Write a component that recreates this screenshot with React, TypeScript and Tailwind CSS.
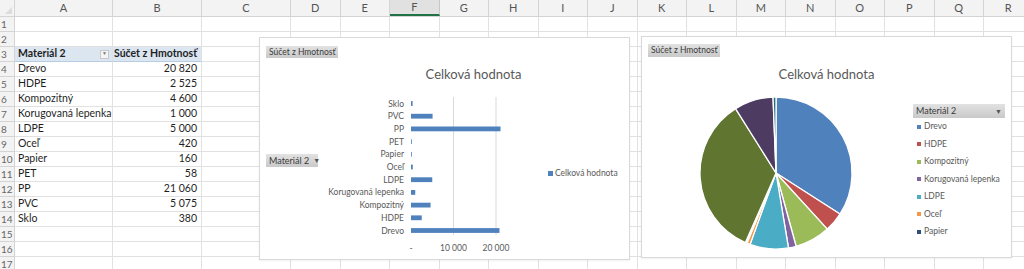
import React from 'react';

const colWidths: { key: string; cls: string }[] = [
  { key: 'A', cls: 'w-[98px]' },
  { key: 'B', cls: 'w-[89px]' },
  { key: 'C', cls: 'w-[89px]' },
  { key: 'D', cls: 'w-[49.5px]' },
  { key: 'E', cls: 'w-[49.5px]' },
  { key: 'F', cls: 'w-[49.5px]' },
  { key: 'G', cls: 'w-[49.5px]' },
  { key: 'H', cls: 'w-[49.5px]' },
  { key: 'I', cls: 'w-[49.5px]' },
  { key: 'J', cls: 'w-[49.5px]' },
  { key: 'K', cls: 'w-[49.5px]' },
  { key: 'L', cls: 'w-[49.5px]' },
  { key: 'M', cls: 'w-[49.5px]' },
  { key: 'N', cls: 'w-[49.5px]' },
  { key: 'O', cls: 'w-[49.5px]' },
  { key: 'P', cls: 'w-[49.5px]' },
  { key: 'Q', cls: 'w-[49.5px]' },
  { key: 'R', cls: 'w-[49.5px]' },
];

const data: { name: string; label: string; value: number }[] = [
  { name: 'Drevo', label: '20 820', value: 20820 },
  { name: 'HDPE', label: '2 525', value: 2525 },
  { name: 'Kompozitný', label: '4 600', value: 4600 },
  { name: 'Korugovaná lepenka', label: '1 000', value: 1000 },
  { name: 'LDPE', label: '5 000', value: 5000 },
  { name: 'Oceľ', label: '420', value: 420 },
  { name: 'Papier', label: '160', value: 160 },
  { name: 'PET', label: '58', value: 58 },
  { name: 'PP', label: '21 060', value: 21060 },
  { name: 'PVC', label: '5 075', value: 5075 },
  { name: 'Sklo', label: '380', value: 380 },
];

const palette = ['#4f81bd', '#c0504d', '#9bbb59', '#8064a2', '#4bacc6', '#f79646', '#2c4d75', '#772c2a', '#5f7530', '#4d3b62', '#276a7c'];

const FieldButton: React.FC<{ label: string; className: string; arrow?: boolean }> = ({ label, className, arrow }) => (
  <div className={`flex shrink-0 items-center justify-between whitespace-nowrap px-[3px] bg-gradient-to-b from-[#e2e2e2] to-[#c9c9c9] text-[#3a3a3a] ${className}`}>
    <span>{label}</span>
    {arrow && <span className="text-[7px] text-[#555] pl-[4px]">▼</span>}
  </div>
);

// plot area of the bar chart, drawn in its own coordinates
const BarPlot: React.FC = () => {
  const order = [...data].reverse();
  const scale = 42.5 / 10000;
  const zero = 93;
  return (
    <svg width={224} height={170} className="shrink-0">
      <line x1={zero + 42.5} y1={9} x2={zero + 42.5} y2={147} stroke="#d9d9d9" strokeWidth={1} />
      <line x1={zero + 85} y1={9} x2={zero + 85} y2={147} stroke="#d9d9d9" strokeWidth={1} />
      {order.map((d, i) => {
        const y = 15.5 + i * 12.7;
        return (
          <g key={d.name}>
            <text x={zero - 7} y={y + 3} textAnchor="end" fontSize={8.5} fill="#595959">{d.name}</text>
            <rect x={zero} y={y - 2.4} width={Math.max(d.value * scale, 0.8)} height={4.8} fill="#4f81bd" />
          </g>
        );
      })}
      <text x={zero} y={163} textAnchor="middle" fontSize={8.5} fill="#595959">-</text>
      <text x={zero + 42.5} y={163} textAnchor="middle" fontSize={8.5} fill="#595959">10 000</text>
      <text x={zero + 85} y={163} textAnchor="middle" fontSize={8.5} fill="#595959">20 000</text>
    </svg>
  );
};

const BarChart: React.FC = () => (
  <div className="absolute left-[259px] top-[37px] flex h-[223px] w-[371px] flex-col bg-white pl-[6px] pt-[8px] border border-[#d9d9d9] shadow-[0_1px_2px_rgba(0,0,0,0.06)]">
    <FieldButton label="Súčet z Hmotnosť" className="self-start h-[12px] text-[8.5px]" />
    <div className="mt-[8px] pl-[52px] text-center text-[13px] leading-[17px] text-[#595959]">Celková hodnota</div>
    <div className="mt-[5px] flex items-center">
      <FieldButton label="Materiál 2" arrow className="self-start mt-[66px] w-[52px] h-[13px] text-[9px]" />
      <BarPlot />
      <div className="ml-[6px] flex items-center gap-[2px] text-[8.5px] text-[#595959]">
        <span className="h-[5px] w-[5px] bg-[#4f81bd]" />
        <span>Celková hodnota</span>
      </div>
    </div>
  </div>
);

const PieChart: React.FC = () => {
  const total = data.reduce((s, d) => s + d.value, 0);
  const cx = 78;
  const cy = 78;
  const r = 76;
  let acc = 0;
  const slices = data.map((d, i) => {
    const a0 = (acc / total) * Math.PI * 2 - Math.PI / 2;
    acc += d.value;
    const a1 = (acc / total) * Math.PI * 2 - Math.PI / 2;
    const large = a1 - a0 > Math.PI ? 1 : 0;
    const x0 = cx + r * Math.cos(a0);
    const y0 = cy + r * Math.sin(a0);
    const x1 = cx + r * Math.cos(a1);
    const y1 = cy + r * Math.sin(a1);
    return { d: `M${cx},${cy} L${x0},${y0} A${r},${r} 0 ${large} 1 ${x1},${y1} Z`, fill: palette[i], key: d.name };
  });
  return (
    <div className="absolute left-[641px] top-[36px] flex h-[222px] w-[371px] flex-col bg-white pl-[6px] pt-[7px] border border-[#d9d9d9] shadow-[0_1px_2px_rgba(0,0,0,0.06)]">
      <FieldButton label="Súčet z Hmotnosť" className="self-start h-[13px] text-[8.5px]" />
      <div className="mt-[9px] pr-[6px] text-center text-[13px] leading-[17px] text-[#595959]">Celková hodnota</div>
      <div className="mt-[12px] flex">
        <svg width={156} height={156} className="ml-[50px] shrink-0">
          {slices.map((s) => (
            <path key={s.key} d={s.d} fill={s.fill} stroke="#ffffff" strokeWidth={1.3} strokeLinejoin="round" />
          ))}
        </svg>
        <div className="ml-[59px] flex flex-col pt-[9px]">
          <FieldButton label="Materiál 2" arrow className="w-[92px] h-[14px] text-[9px]" />
          {data.slice(0, 7).map((d, i) => (
            <div key={d.name} className="flex h-[17.5px] items-center gap-[3px] pl-[4px] text-[8.5px] text-[#595959] whitespace-nowrap">
              <span className="h-[4px] w-[4px]" style={{ backgroundColor: palette[i] }} />
              <span>{d.name}</span>
            </div>
          ))}
        </div>
      </div>
    </div>
  );
};

const App: React.FC = () => {
  const rowNums = Array.from({ length: 17 }, (_, i) => i + 1);

  const cellContent = (row: number, col: string) => {
    if (row === 3 && col === 'A') {
      return (
        <div className="flex h-full items-center justify-between pl-[3px] pr-[3px] font-bold text-[#1f1f1f]">
          <span>Materiál 2</span>
          <span className="flex h-[9px] w-[9px] items-center justify-center border border-[#c8c8c8] bg-[#f4f4f4] text-[5px] text-[#777]">▼</span>
        </div>
      );
    }
    if (row === 3 && col === 'B') {
      return <div className="flex h-full items-center whitespace-nowrap pl-[1px] font-bold text-[#1f1f1f]">Súčet z Hmotnosť</div>;
    }
    const d = data[row - 4];
    if (d && row >= 4 && row <= 14) {
      if (col === 'A') return <div className="flex h-full items-center pl-[3px] text-[#1f1f1f] whitespace-nowrap">{d.name}</div>;
      if (col === 'B') return <div className="flex h-full items-center justify-end pr-[4px] text-[#1f1f1f]">{d.label}</div>;
    }
    return null;
  };

  return (
    <div className="relative w-[1024px] h-[269px] overflow-hidden bg-white font-['Lato',sans-serif] text-[10.5px]">
      <div className="flex h-[17px] bg-[#f3f3f3] border-b border-[#d4d4d4] text-[11px]">
        <div className="flex w-[15px] shrink-0 items-end justify-end border-r border-[#d4d4d4] p-[2px]">
          <svg width={7} height={7}>
            <polygon points="7,0 7,7 0,7" fill="#dcdcdc" />
          </svg>
        </div>
        {colWidths.map((c) => (
          <div
            key={c.key}
            className={`${c.cls} shrink-0 flex items-center justify-center border-r text-[#555] ${c.key === 'F' ? 'bg-[#e1e1e1] border-[#c6c6c6] border-b-2 border-b-[#217346]' : 'border-[#d4d4d4]'}`}
          >
            {c.key}
          </div>
        ))}
      </div>
      {rowNums.map((r) => (
        <div key={r} className="flex h-[15px]">
          <div className="w-[15px] shrink-0 bg-[#f3f3f3] border-r border-b border-[#d4d4d4] pl-[1px] text-[10px] leading-[14px] text-[#666]">{r}</div>
          {colWidths.map((c) => (
            <div
              key={c.key}
              className={`${c.cls} shrink-0 border-r border-b border-[#e1e1e1] ${r === 3 && (c.key === 'A' || c.key === 'B') ? 'bg-[#dce6f1] border-b-[#b8cce4]' : ''}`}
            >
              {cellContent(r, c.key)}
            </div>
          ))}
        </div>
      ))}
      <BarChart />
      <PieChart />
    </div>
  );
};

export default App;
